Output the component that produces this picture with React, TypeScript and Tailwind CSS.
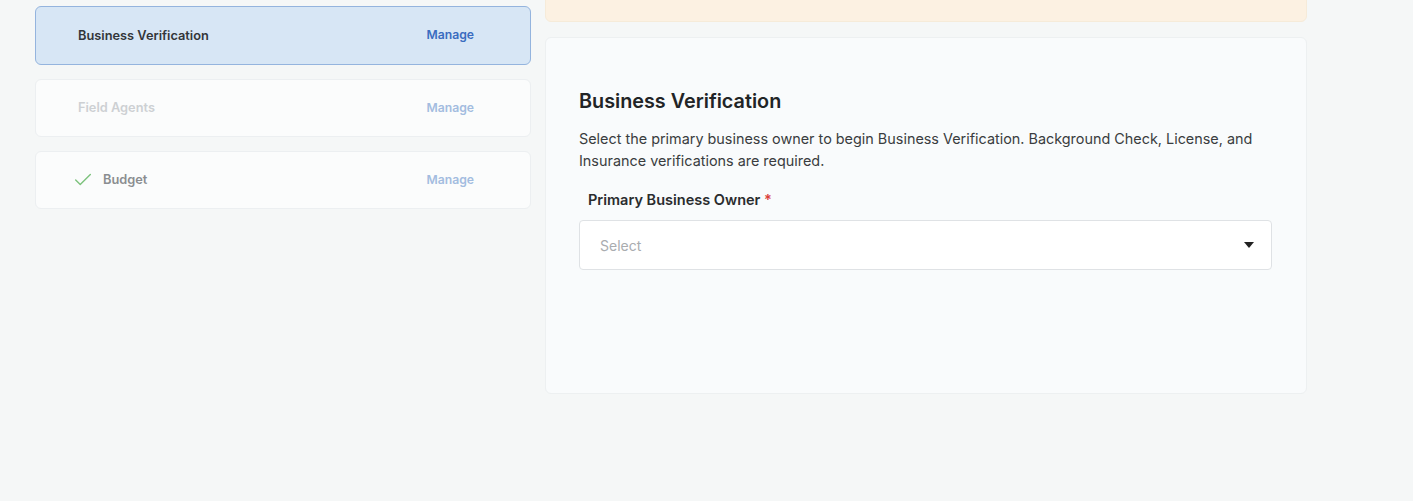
import { Check } from "lucide-react";

type Step = {
  label: string;
  state: "active" | "disabled" | "done";
};

const steps: Step[] = [
  { label: "Business Verification", state: "active" },
  { label: "Field Agents", state: "disabled" },
  { label: "Budget", state: "done" },
];

function StepCard({ step }: { step: Step }) {
  if (step.state === "active") {
    return (
      <div className="flex h-[59px] items-center justify-between rounded-md border border-[#94b4de] bg-[#d7e6f5] pl-[42px] pr-[56px]">
        <span className="text-[12.8px] font-semibold text-[#33363a]">{step.label}</span>
        <span className="text-[12.2px] font-semibold text-[#3a6cc0]">Manage</span>
      </div>
    );
  }

  return (
    <div className="flex h-[58px] items-center justify-between rounded-md border border-[#eceff1] bg-[#fbfcfc] pr-[56px]">
      {step.state === "done" ? (
        <div className="flex items-center gap-[9px] pl-[36px]">
          <Check className="h-[22px] w-[22px] text-[#7cc27c]" strokeWidth={1.5} />
          <span className="text-[12.8px] font-semibold text-[#8a8d90]">{step.label}</span>
        </div>
      ) : (
        <span className="pl-[42px] text-[12.8px] font-semibold text-[#cdd0d3]">{step.label}</span>
      )}
      <span className="text-[12.2px] font-semibold text-[#a3bce0]">Manage</span>
    </div>
  );
}

export default function App() {
  return (
    <div
      className="flex h-[501px] w-full gap-[14px] overflow-hidden bg-[#f5f7f7] pl-[35px] pt-[6px]"
      style={{ fontFamily: "Inter, 'Noto Sans', sans-serif" }}
    >
      {/* Steps list */}
      <div className="flex w-[496px] shrink-0 flex-col gap-[14px]">
        {steps.map((s) => (
          <StepCard key={s.label} step={s} />
        ))}
      </div>

      {/* Main panel */}
      <div className="-mt-[6px] flex w-[762px] shrink-0 flex-col gap-[15px]">
        <div className="-mt-[30px] h-[52px] rounded-md border border-[#f6ebd9] bg-[#fcf1e2]" />

        <div className="h-[357px] rounded-md border border-[#edf0f1] bg-[#f9fbfc] pl-[33px] pr-[34px] pt-[51px]">
          <h2 className="text-[19.8px] font-semibold leading-6 text-[#222426]">Business Verification</h2>
          <p className="mt-[15px] text-[14.4px] leading-[22px] text-[#3a3d40]">
            Select the primary business owner to begin Business Verification. Background Check, License, and
            <br />
            Insurance verifications are required.
          </p>
          <label className="mt-[18px] block pl-[9px] text-[14.5px] font-semibold leading-5 text-[#2a2c2e]">
            Primary Business Owner <span className="text-[#d9403a]">*</span>
          </label>
          <div className="mt-[10px] flex h-[50px] items-center justify-between rounded border border-[#dfe2e5] bg-white pl-[20px] pr-[17px]">
            <span className="text-[14px] text-[#a9acaf]">Select</span>
            <svg width="10" height="6" viewBox="0 0 10 6" className="text-[#222]">
              <path d="M0 0h10L5 6z" fill="currentColor" />
            </svg>
          </div>
        </div>
      </div>
    </div>
  );
}
